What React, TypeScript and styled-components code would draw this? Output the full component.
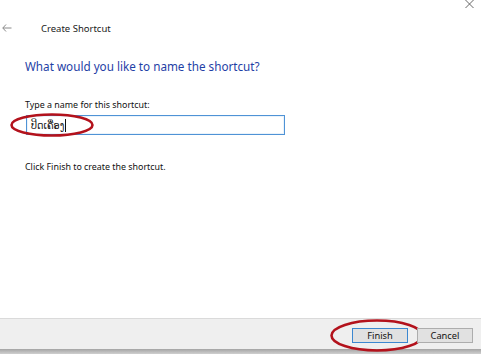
import styled, { createGlobalStyle } from "styled-components";

const Global = createGlobalStyle`
  html, body {
    margin: 0;
    padding: 0;
    background: #ffffff;
  }
  body {
    font-family: "Noto Sans", "DejaVu Sans", sans-serif;
  }
`;

const Window = styled.div`
  width: 481px;
  height: 354px;
  display: flex;
  flex-direction: column;
  background: #ffffff;
  overflow: hidden;
`;

const TopBar = styled.div`
  height: 12px;
  display: flex;
  justify-content: flex-end;
  align-items: flex-start;
  padding-right: 7px;
`;

const Header = styled.div`
  height: 32px;
  display: flex;
  align-items: center;
  gap: 29px;
  padding-left: 2px;
  font-size: 9.5px;
  color: #1a1a1a;
`;

const Content = styled.div`
  padding: 0 25px;
  display: flex;
  flex-direction: column;
`;

const Heading = styled.div`
  margin-top: 14px;
  font-size: 11.7px;
  line-height: 16px;
  color: #1f3fa6;
`;

const Text = styled.div<{ $gap: number }>`
  margin-top: ${(p) => p.$gap}px;
  font-size: 8.9px;
  line-height: 12px;
  color: #111;
`;

const Field = styled.div`
  position: relative;
  margin-top: 4px;
  margin-left: 1px;
  width: 259px;
  height: 20px;
  box-sizing: border-box;
  border: 1px solid #4f93d6;
  box-shadow: inset 0 0 0 1px #eaf3fb;
  display: flex;
  align-items: center;
  padding-left: 4px;
  font-family: "DejaVu Sans", "Noto Sans", sans-serif;
  font-size: 9.6px;
  color: #111;
`;

const Caret = styled.span`
  display: inline-block;
  width: 1px;
  height: 13px;
  background: #111;
  margin-left: 1px;
`;

const Mark = styled.svg<{ $l: number; $t: number }>`
  position: absolute;
  left: ${(p) => p.$l}px;
  top: ${(p) => p.$t}px;
  overflow: visible;
  pointer-events: none;
`;

const Footer = styled.div`
  margin-top: auto;
  height: 31px;
  box-sizing: border-box;
  border-top: 1px solid #dadada;
  background: #efefef;
  display: flex;
  justify-content: flex-end;
  align-items: center;
  gap: 9px;
  padding-right: 8px;
  padding-top: 2px;
`;

const Shade = styled.div`
  height: 5px;
  background: linear-gradient(#a4a4a4, #cfcfcf);
`;

const Button = styled.div<{ $primary?: boolean }>`
  position: relative;
  width: 56px;
  height: 15px;
  box-sizing: border-box;
  border: 1px solid ${(p) => (p.$primary ? "#3c87d0" : "#adadad")};
  background: #e1e1e1;
  display: flex;
  align-items: center;
  justify-content: center;
  font-size: 9.3px;
  color: #111;
`;

function Ring({ l, t, w, h }: { l: number; t: number; w: number; h: number }) {
  return (
    <Mark $l={l} $t={t} width={w} height={h}>
      <ellipse
        cx={w / 2}
        cy={h / 2}
        rx={w / 2 - 1.5}
        ry={h / 2 - 1.5}
        fill="none"
        stroke="#b3121c"
        strokeWidth={2.6}
      />
    </Mark>
  );
}

export default function App() {
  return (
    <Window>
      <Global />
      <TopBar>
        <svg width="9" height="8" viewBox="0 0 9 8">
          <path d="M0.5 0 L8.5 8 M8.5 0 L0.5 8" stroke="#555" strokeWidth="0.9" />
        </svg>
      </TopBar>
      <Header>
        <svg width="10" height="8" viewBox="0 0 10 8">
          <path d="M4 0.5 L0.8 4 L4 7.5 M0.8 4 H9.5" fill="none" stroke="#8a8a8a" strokeWidth="1" />
        </svg>
        <span>Create Shortcut</span>
      </Header>
      <Content>
        <Heading>What would you like to name the shortcut?</Heading>
        <Text $gap={25}>Type a name for this shortcut:</Text>
        <Field>
          ປິດເຄື່ອງ
          <Caret />
          <Ring l={-17} t={-3} w={84} h={24} />
        </Field>
        <Text $gap={26}>Click Finish to create the shortcut.</Text>
      </Content>
      <Footer>
        <Button $primary>
          Finish
          <Ring l={-23} t={-10} w={94} h={33} />
        </Button>
        <Button>Cancel</Button>
      </Footer>
      <Shade />
    </Window>
  );
}
